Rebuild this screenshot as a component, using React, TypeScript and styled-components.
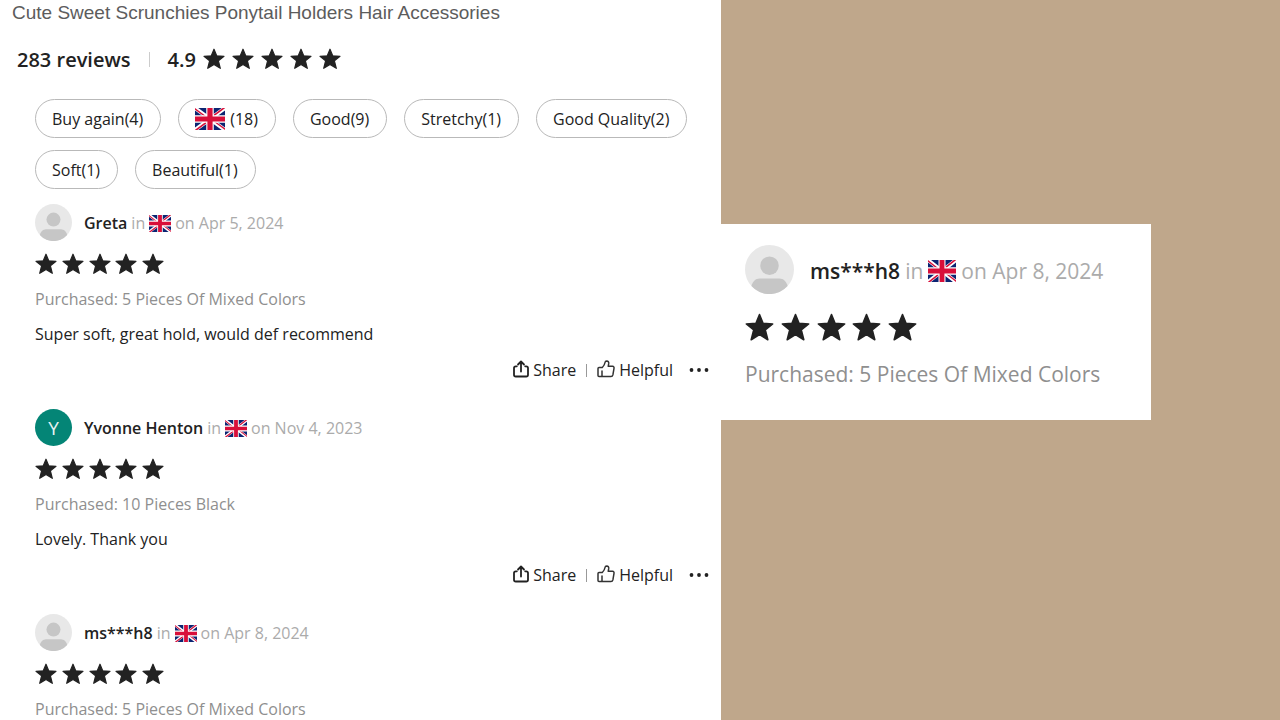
import React from "react";
import styled, { createGlobalStyle } from "styled-components";

const GlobalStyle = createGlobalStyle`
  *, *::before, *::after { box-sizing: border-box; }
  body { margin: 0; background: #bfa78b; }
  button { font: inherit; color: inherit; cursor: pointer; }
  h1, h2, p, ul { margin: 0; padding: 0; }
`;

const Page = styled.div`
  display: grid;
  grid-template-columns: minmax(0, 721fr) minmax(0, 559fr);
  height: 100vh;
  overflow: hidden;
  background: #bfa78b;
  color: #222;
  font-family: "Open Sans", "Noto Sans", sans-serif;
  font-size: 16px;
`;

const Panel = styled.main`
  background: #fff;
  min-height: 100vh;
`;

const Title = styled.h1`
  padding: 0 12px;
  font-family: "Liberation Sans", Arial, sans-serif;
  font-size: 19px;
  font-weight: 400;
  line-height: 26px;
  color: #5c5c5c;
  white-space: nowrap;
`;

const Summary = styled.div`
  display: flex;
  align-items: center;
  margin-top: 15px;
  padding: 0 17px;
  height: 36px;
  font-size: 20px;
  font-weight: 600;
`;

const Count = styled.h2`
  font-size: 20px;
  font-weight: 600;
`;

const Divider = styled.span<{ $height: number; $space: number; $color: string }>`
  width: 1px;
  height: ${(p) => p.$height}px;
  margin: 0 ${(p) => p.$space}px;
  background: ${(p) => p.$color};
`;

const Score = styled.span`
  margin-right: 7px;
`;

const StarRow = styled.div<{ $width: number; $height: number }>`
  display: flex;
  align-items: center;
  justify-content: space-between;
  width: ${(p) => p.$width}px;
  height: ${(p) => p.$height}px;
`;

const Chips = styled.ul`
  display: flex;
  flex-wrap: wrap;
  gap: 12px 17px;
  margin-top: 22px;
  padding: 0 30px 0 35px;
  list-style: none;
`;

const Chip = styled.button`
  display: flex;
  align-items: center;
  gap: 5px;
  height: 39px;
  padding: 0 17px 0 16px;
  border: 1px solid #b9b9b9;
  border-radius: 20px;
  background: #fff;
  white-space: nowrap;
`;

const Reviews = styled.section`
  display: flex;
  flex-direction: column;
  gap: 21px;
  padding: 15px 12px 0 35px;
`;

const Review = styled.article`
  display: flex;
  flex-direction: column;
`;

const Author = styled.header<{ $large?: boolean }>`
  display: flex;
  align-items: center;
  gap: ${(p) => (p.$large ? 16 : 12)}px;
  height: ${(p) => (p.$large ? 49 : 37)}px;
  margin-bottom: ${(p) => (p.$large ? 16 : 11)}px;
`;

const Byline = styled.div<{ $large?: boolean }>`
  display: flex;
  align-items: center;
  gap: ${(p) => (p.$large ? 5 : 4)}px;
  padding-top: ${(p) => (p.$large ? 3 : 1)}px;
  color: #ababab;
  white-space: nowrap;
`;

const Name = styled.strong`
  font-weight: 600;
  color: #222;
`;

const Initial = styled.span`
  display: flex;
  align-items: center;
  justify-content: center;
  width: 37px;
  height: 37px;
  border-radius: 50%;
  background: #048576;
  color: #e8f4f2;
  font-size: 19px;
`;

const Purchased = styled.p<{ $large?: boolean }>`
  margin-top: ${(p) => (p.$large ? 13 : 6)}px;
  line-height: 35px;
  color: #8f8f8f;
  white-space: nowrap;
`;

const Comment = styled.p`
  line-height: 35px;
`;

const Actions = styled.div`
  display: flex;
  align-items: center;
  justify-content: flex-end;
  height: 36px;
`;

const Action = styled.button`
  display: flex;
  align-items: center;
  gap: 4px;
  padding: 0;
  border: 0;
  background: none;
`;

const More = styled(Action)`
  margin-left: 16px;
`;

const Aside = styled.aside`
  padding-top: 224px;
`;

const Highlight = styled.article`
  width: 77%;
  padding: 21px 24px 28px;
  background: #fff;
  font-size: 21px;
`;

function Star({ size }: { size: number }) {
  return (
    <svg width={size} height={size} viewBox="0 0 22 22" aria-hidden="true">
      <path
        d="M11 1.2 13.7 7.8 21 8.3 15.4 12.8 17.3 20.3 11 16.4 4.7 20.3 6.6 12.8 1 8.3 8.3 7.8Z"
        fill="#222"
        stroke="#222"
        strokeWidth="1.2"
        strokeLinejoin="round"
      />
    </svg>
  );
}

function Stars({ size, width, height }: { size: number; width: number; height: number }) {
  return (
    <StarRow $width={width} $height={height} role="img" aria-label="5 stars">
      {[0, 1, 2, 3, 4].map((n) => (
        <Star key={n} size={size} />
      ))}
    </StarRow>
  );
}

function Flag({ width, height }: { width: number; height: number }) {
  return (
    <svg width={width} height={height} viewBox="0 0 44 32" preserveAspectRatio="none" role="img" aria-label="United Kingdom">
      <path fill="#0b2472" d="M0 0h44v32H0z" />
      <path stroke="#fff" strokeWidth="5.6" d="M0 0 44 32M44 0 0 32" />
      <path fill="#d80f3a" d="M0 0 16 11.6V14L0 2.4ZM44 0v.4L28 12h-4L40.500 0ZM44 32 28 20.400V18l16 11.600ZM0 32v-.4L16 20h4L3.500 32Z" />
      <path fill="#fff" d="M16.500 0h11v32h-11zM0 10.500h44v11H0z" />
      <path fill="#d80f3a" d="M18.200 0h7.600v32h-7.600zM0 12.500h44v7H0z" />
    </svg>
  );
}

function Avatar({ size }: { size: number }) {
  return (
    <svg width={size} height={size} viewBox="0 0 37 37" aria-hidden="true">
      <circle cx="18.500" cy="18.500" r="18.500" fill="#e8e8e8" />
      <circle cx="18.500" cy="15.600" r="7" fill="#c6c6c6" />
      <path d="M4.800 31C6 27 8 25.500 11 25.300H26C29 25.500 31 27 32.200 31A18.500 18.500 0 0 1 4.800 31Z" fill="#c6c6c6" />
    </svg>
  );
}

function ShareIcon() {
  return (
    <svg width="17" height="20" viewBox="0 0 17 20" fill="none" stroke="#222" strokeWidth="1.800" strokeLinecap="round" strokeLinejoin="round" aria-hidden="true">
      <path d="M4.800 6.300H3.800Q2 6.300 2 8.100V14.700Q2 16.500 3.800 16.500H14.200Q16 16.500 16 14.700V8.100Q16 6.300 14.200 6.300H13.200M9 11.500V1.500M6 4.500 9 1.500 12 4.500" />
    </svg>
  );
}

function ThumbIcon() {
  return (
    <svg width="18" height="20" viewBox="0 0 18 20" fill="none" stroke="#333" strokeWidth="1.500" strokeLinejoin="round" strokeLinecap="round" aria-hidden="true">
      <path d="M1 8.500Q1 7.500 2 7.500H5.300Q7.500 5.500 8 2.500Q8.200 1 9.700 1Q12 1.200 11.700 3.700L11.200 6.300H15.500Q17.300 6.500 17 8.300L15.900 14.900Q15.500 16.500 14 16.500H2Q1 16.500 1 15.500ZM5 11V16.300" />
    </svg>
  );
}

function DotsIcon() {
  return (
    <svg width="20" height="6" viewBox="0 0 20 6" fill="#222" aria-hidden="true">
      <circle cx="2.500" cy="3" r="1.900" />
      <circle cx="10" cy="3" r="1.900" />
      <circle cx="17.500" cy="3" r="1.900" />
    </svg>
  );
}

type ReviewData = {
  name: string;
  date: string;
  purchased: string;
  comment?: string;
  initial?: string;
};

const reviews: ReviewData[] = [
  { name: "Greta", date: "Apr 5, 2024", purchased: "5 Pieces Of Mixed Colors", comment: "Super soft, great hold, would def recommend" },
  { name: "Yvonne Henton", date: "Nov 4, 2023", purchased: "10 Pieces Black", comment: "Lovely. Thank you", initial: "Y" },
  { name: "ms***h8", date: "Apr 8, 2024", purchased: "5 Pieces Of Mixed Colors" },
];

const filters = ["Buy again(4)", "(18)", "Good(9)", "Stretchy(1)", "Good Quality(2)", "Soft(1)", "Beautiful(1)"];

function ReviewContent({ review, large }: { review: ReviewData; large?: boolean }) {
  return (
    <>
      <Author $large={large}>
        {review.initial ? <Initial>{review.initial}</Initial> : <Avatar size={large ? 49 : 37} />}
        <Byline $large={large}>
          <Name>{review.name}</Name>
          <span>in</span>
          <Flag width={large ? 28 : 22} height={large ? 22 : 17} />
          <span>on {review.date}</span>
        </Byline>
      </Author>
      <Stars size={large ? 29 : 22} width={large ? 172 : 129} height={large ? 34 : 24} />
      <Purchased $large={large}>Purchased: {review.purchased}</Purchased>
    </>
  );
}

export default function App() {
  return (
    <>
      <GlobalStyle />
      <Page>
        <Panel>
          <Title>Cute Sweet Scrunchies Ponytail Holders Hair Accessories</Title>
          <Summary>
            <Count>283 reviews</Count>
            <Divider $height={15} $space={18} $color="#ccc" />
            <Score>4.9</Score>
            <Stars size={22} width={138} height={24} />
          </Summary>
          <Chips>
            {filters.map((label) => (
              <li key={label}>
                <Chip type="button">
                  {label === "(18)" && <Flag width={30} height={22} />}
                  {label}
                </Chip>
              </li>
            ))}
          </Chips>
          <Reviews>
            {reviews.map((review) => (
              <Review key={review.name}>
                <ReviewContent review={review} />
                {review.comment && (
                  <>
                    <Comment>{review.comment}</Comment>
                    <Actions>
                      <Action type="button">
                        <ShareIcon />
                        Share
                      </Action>
                      <Divider $height={13} $space={10} $color="#999" />
                      <Action type="button">
                        <ThumbIcon />
                        Helpful
                      </Action>
                      <More type="button" aria-label="More options">
                        <DotsIcon />
                      </More>
                    </Actions>
                  </>
                )}
              </Review>
            ))}
          </Reviews>
        </Panel>
        <Aside>
          <Highlight>
            <ReviewContent review={reviews[2]} large />
          </Highlight>
        </Aside>
      </Page>
    </>
  );
}
